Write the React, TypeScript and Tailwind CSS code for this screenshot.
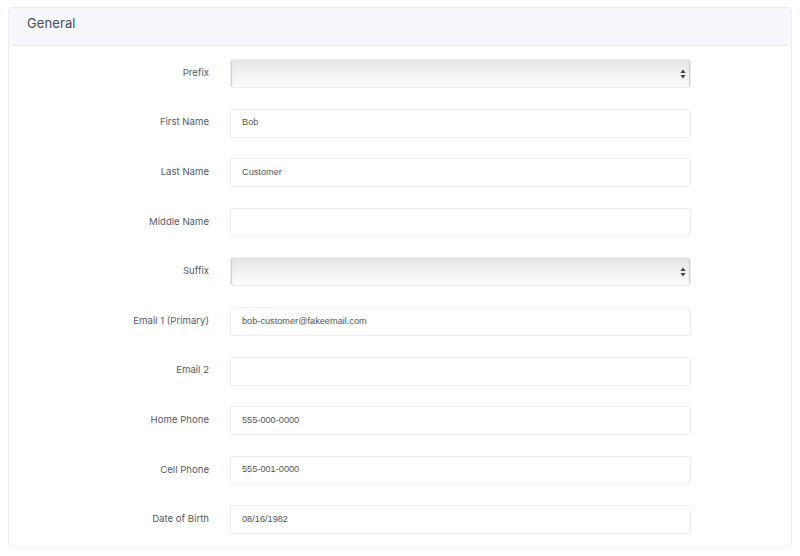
import React from 'react';

const rows: { label: string; value?: string; select?: boolean }[] = [
  { label: 'Prefix', select: true },
  { label: 'First Name', value: 'Bob' },
  { label: 'Last Name', value: 'Customer' },
  { label: 'Middle Name', value: '' },
  { label: 'Suffix', select: true },
  { label: 'Email 1 (Primary)', value: 'bob-customer@fakeemail.com' },
  { label: 'Email 2', value: '' },
  { label: 'Home Phone', value: '555-000-0000' },
  { label: 'Cell Phone', value: '555-001-0000' },
  { label: 'Date of Birth', value: '08/16/1982' },
];

function SelectBox() {
  return (
    <div className="relative h-[29px] w-[461px] rounded-[3px] border border-[#ececec] bg-gradient-to-b from-[#e4e4e4] via-[#f1f1f1] to-[#fdfdfd] shadow-[inset_2px_0_1px_-1px_#cfcfcf,inset_-2px_0_1px_-1px_#cfcfcf]">
      <svg className="absolute right-[4px] top-[9px]" width="6" height="10" viewBox="0 0 6 10">
        <path d="M3 0.5 L5.6 4 H0.4 Z" fill="#444" />
        <path d="M3 9.5 L5.6 6 H0.4 Z" fill="#444" />
      </svg>
    </div>
  );
}

export default function App() {
  return (
    <div className="min-h-screen bg-white px-[8px] pt-[7px] font-['Inter',sans-serif] text-[#575962]">
      <div className="overflow-hidden rounded-[4px] border border-[#ebedf2]">
        <div className="flex h-[38px] items-center border-b border-[#ebedf2] bg-[#f6f7fa] px-[18px] pb-[5px]">
          <h3 className="text-[13px] font-normal tracking-[0.1px] text-[#4b4d57]">General</h3>
        </div>
        <div className="flex flex-col gap-[20.6px] pb-[13px] pt-[13px]">
          {rows.map((r) => (
            <div key={r.label} className="flex items-center">
              <label className="w-[200px] pb-[1px] text-right text-[9.6px] text-[#575962]">{r.label}</label>
              <div className="ml-[21px]">
                {r.select ? (
                  <SelectBox />
                ) : (
                  <div className="flex h-[29px] w-[461px] items-center rounded-[3px] border border-[#ebedf2] bg-white px-[11px] font-['Liberation_Sans',Arial,sans-serif] text-[9.2px] text-[#555]">
                    {r.value}
                  </div>
                )}
              </div>
            </div>
          ))}
        </div>
      </div>
    </div>
  );
}
